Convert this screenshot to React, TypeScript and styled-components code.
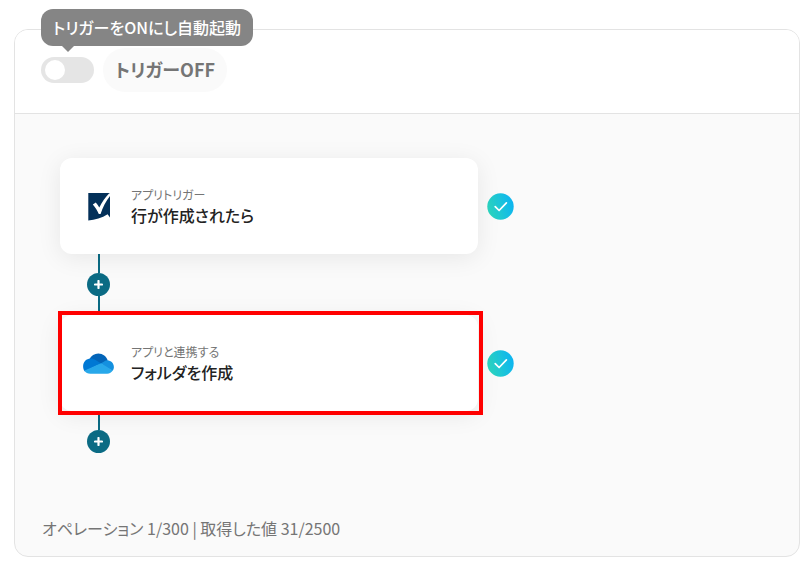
import React, { useState } from "react";
import styled, { createGlobalStyle } from "styled-components";

const GlobalStyle = createGlobalStyle`
  *, *::before, *::after { box-sizing: border-box; }
  body {
    margin: 0;
    background: #fff;
    color: #222;
    font-family: "Noto Sans CJK JP", "Noto Sans", sans-serif;
    font-feature-settings: "palt";
  }
`;

const Panel = styled.main`
  margin: 29px 7px 7px 14px;
  border: 1px solid #e3e3e3;
  border-radius: 14px;
  background: #fafafa;
`;

const Header = styled.header`
  display: flex;
  align-items: center;
  gap: 9px;
  padding: 18px 26px 21px;
  border-bottom: 1px solid #e3e3e3;
  border-radius: 13px 13px 0 0;
  background: #fff;
`;

const SwitchWrap = styled.div`
  position: relative;
  display: flex;
`;

const Switch = styled.input`
  appearance: none;
  display: flex;
  align-items: center;
  width: 53px;
  height: 26px;
  margin: 0;
  padding: 0 4px;
  border-radius: 13px;
  background: #e5e5e5;
  cursor: pointer;

  &::before {
    content: "";
    width: 20px;
    height: 20px;
    border-radius: 50%;
    background: #fff;
  }
  &:checked {
    justify-content: flex-end;
    background: #0b6b84;
  }
`;

const Tooltip = styled.div`
  position: absolute;
  z-index: 2;
  left: 0;
  bottom: 37px;
  padding: 6px 12px 7px;
  border-radius: 12px;
  background: #858585;
  color: #fff;
  font-size: 16px;
  font-weight: 500;
  line-height: 24px;
  white-space: nowrap;

  &::after {
    content: "";
    position: absolute;
    top: 100%;
    left: 21px;
    border: 6px solid transparent;
    border-top-color: #858585;
    border-bottom: 0;
  }
`;

const StateLabel = styled.label`
  padding: 0 12px 2px;
  border-radius: 22px;
  background: #fafafa;
  color: #757575;
  font-size: 18px;
  font-weight: 700;
  line-height: 42px;
`;

const Flow = styled.ol`
  margin: 0;
  padding: 44px 45px 0;
  list-style: none;
`;

const Step = styled.li`
  display: flex;
  flex-direction: column;
`;

const StepRow = styled.div`
  display: flex;
  align-items: center;
  gap: 9px;
`;

const Card = styled.button<{ $highlighted?: boolean }>`
  position: relative;
  display: flex;
  flex: 0 1 418px;
  align-items: center;
  gap: 17px;
  height: 96px;
  padding: 0 23px;
  border: 0;
  border-radius: 12px;
  background: #fff;
  box-shadow: 0 4px 24px rgba(0, 0, 0, 0.08);
  color: inherit;
  font: inherit;
  font-feature-settings: inherit;
  text-align: left;
  cursor: pointer;

  &::after {
    content: "";
    display: ${(p) => (p.$highlighted ? "block" : "none")};
    position: absolute;
    inset: -4px -5px -4px -2px;
    border: 4px solid #f00;
  }
`;

const CardText = styled.span`
  display: flex;
  flex-direction: column;
`;

const Kind = styled.span`
  color: #757575;
  font-size: 12px;
  line-height: 18px;
`;

const Title = styled.span`
  font-size: 16px;
  font-weight: 500;
  line-height: 22px;
`;

const Connector = styled.div<{ $last?: boolean }>`
  display: flex;
  flex-direction: column;
  align-items: center;
  width: 23px;
  margin-left: 27px;

  &::before,
  &::after {
    content: "";
    width: 2px;
    height: 19px;
    background: #0b6b84;
  }
  &::after {
    display: ${(p) => (p.$last ? "none" : "block")};
  }
`;

const AddButton = styled.button`
  display: flex;
  align-items: center;
  justify-content: center;
  width: 23px;
  height: 23px;
  padding: 0;
  border: 0;
  border-radius: 50%;
  background: #0b6b84;
  cursor: pointer;
`;

const Footer = styled.p`
  margin: 63px 0 0;
  padding: 0 27px 16px;
  color: #757575;
  font-size: 16px;
  line-height: 24px;
`;

const SmartsheetIcon = () => (
  <svg width="31" height="30" viewBox="-1 0 31 30" aria-hidden="true">
    <path fill="#033059" d="M4.3 2H26V26.5L23.6 23.2C18 26.8 11 28.7 4.3 29.5Z" />
    <path
      fill="#fff"
      d="M8.8 13.5L11.8 11.6C13.2 13.1 14.4 14.8 15.3 16.5C18 11 21.5 6.5 25 2.6L26.2 2V4.8C21.8 10.5 18.6 16.5 16.6 23H14.8C13.3 19.5 11.3 16.5 8.8 13.5Z"
    />
  </svg>
);

const OneDriveIcon = () => (
  <svg width="31" height="31" viewBox="1.5 0.5 29 29" aria-hidden="true">
    <path
      fill="#0364b8"
      d="M7.6 10.8C9.2 7.6 12.2 5.6 15.8 5.6C20 5.6 23.5 8.4 24.6 12.2L18.5 16.5L10 15Z"
    />
    <path
      fill="#0078d4"
      d="M8.5 10.3C10.2 10.2 11.6 10.8 12.8 11.5L18.5 15L11.5 18.4L3 22.3C2.1 21 1.6 19.4 1.6 17.5C1.6 13.5 4.6 10.4 8.5 10.3Z"
    />
    <path
      fill="#1490df"
      d="M18.2 15L21.2 13.1C22.2 12.4 23.4 12 24.4 12C27.7 12.2 30.4 14.9 30.4 18.2C30.4 19.5 30 20.8 29.2 21.8L22 18Z"
    />
    <path
      fill="#28a8ea"
      d="M2.7 21.8L11.5 17.8L18.4 14.8L29.3 21.6C28.2 23.4 26.4 24.5 24.1 24.5H8.4C6 24.5 4 23.5 2.7 21.8Z"
    />
  </svg>
);

const DoneBadge = ({ id }: { id: string }) => (
  <svg width="27" height="27" viewBox="0 0 27 27" role="img" aria-label="完了">
    <defs>
      <linearGradient id={id} x1="0" y1="0.65" x2="1" y2="0.35">
        <stop offset="0" stopColor="#2dd6bd" />
        <stop offset="1" stopColor="#0cb4f2" />
      </linearGradient>
    </defs>
    <circle cx="13.5" cy="13.5" r="13.2" fill={`url(#${id})`} />
    <path
      d="M8.2 13.6L12.1 17.5L19.4 9.8"
      fill="none"
      stroke="#fff"
      strokeWidth="1.7"
      strokeLinecap="round"
      strokeLinejoin="round"
    />
  </svg>
);

const PlusIcon = () => (
  <svg width="9" height="9" viewBox="0 0 9 9" aria-hidden="true">
    <path d="M4.5 1V8M1 4.5H8" stroke="#fff" strokeWidth="2.2" strokeLinecap="round" />
  </svg>
);

const steps = [
  { id: "trigger", kind: "アプリトリガー", title: "行が作成されたら", Icon: SmartsheetIcon, highlighted: false },
  { id: "action", kind: "アプリと連携する", title: "フォルダを作成", Icon: OneDriveIcon, highlighted: true },
];

export default function App() {
  const [on, setOn] = useState(false);
  return (
    <>
      <GlobalStyle />
      <Panel>
        <Header>
          <SwitchWrap>
            <Switch
              id="trigger-switch"
              type="checkbox"
              role="switch"
              checked={on}
              onChange={(e) => setOn(e.target.checked)}
              aria-describedby="trigger-tip"
            />
            <Tooltip id="trigger-tip" role="tooltip">
              トリガーをONにし自動起動
            </Tooltip>
          </SwitchWrap>
          <StateLabel htmlFor="trigger-switch">{on ? "トリガーON" : "トリガーOFF"}</StateLabel>
        </Header>
        <Flow>
          {steps.map(({ id, kind, title, Icon, highlighted }, i) => (
            <Step key={id}>
              <StepRow>
                <Card type="button" $highlighted={highlighted}>
                  <Icon />
                  <CardText>
                    <Kind>{kind}</Kind>
                    <Title>{title}</Title>
                  </CardText>
                </Card>
                <DoneBadge id={`done-${id}`} />
              </StepRow>
              <Connector $last={i === steps.length - 1}>
                <AddButton type="button" aria-label="ステップを追加">
                  <PlusIcon />
                </AddButton>
              </Connector>
            </Step>
          ))}
        </Flow>
        <Footer>オペレーション 1/300 | 取得した値 31/2500</Footer>
      </Panel>
    </>
  );
}
